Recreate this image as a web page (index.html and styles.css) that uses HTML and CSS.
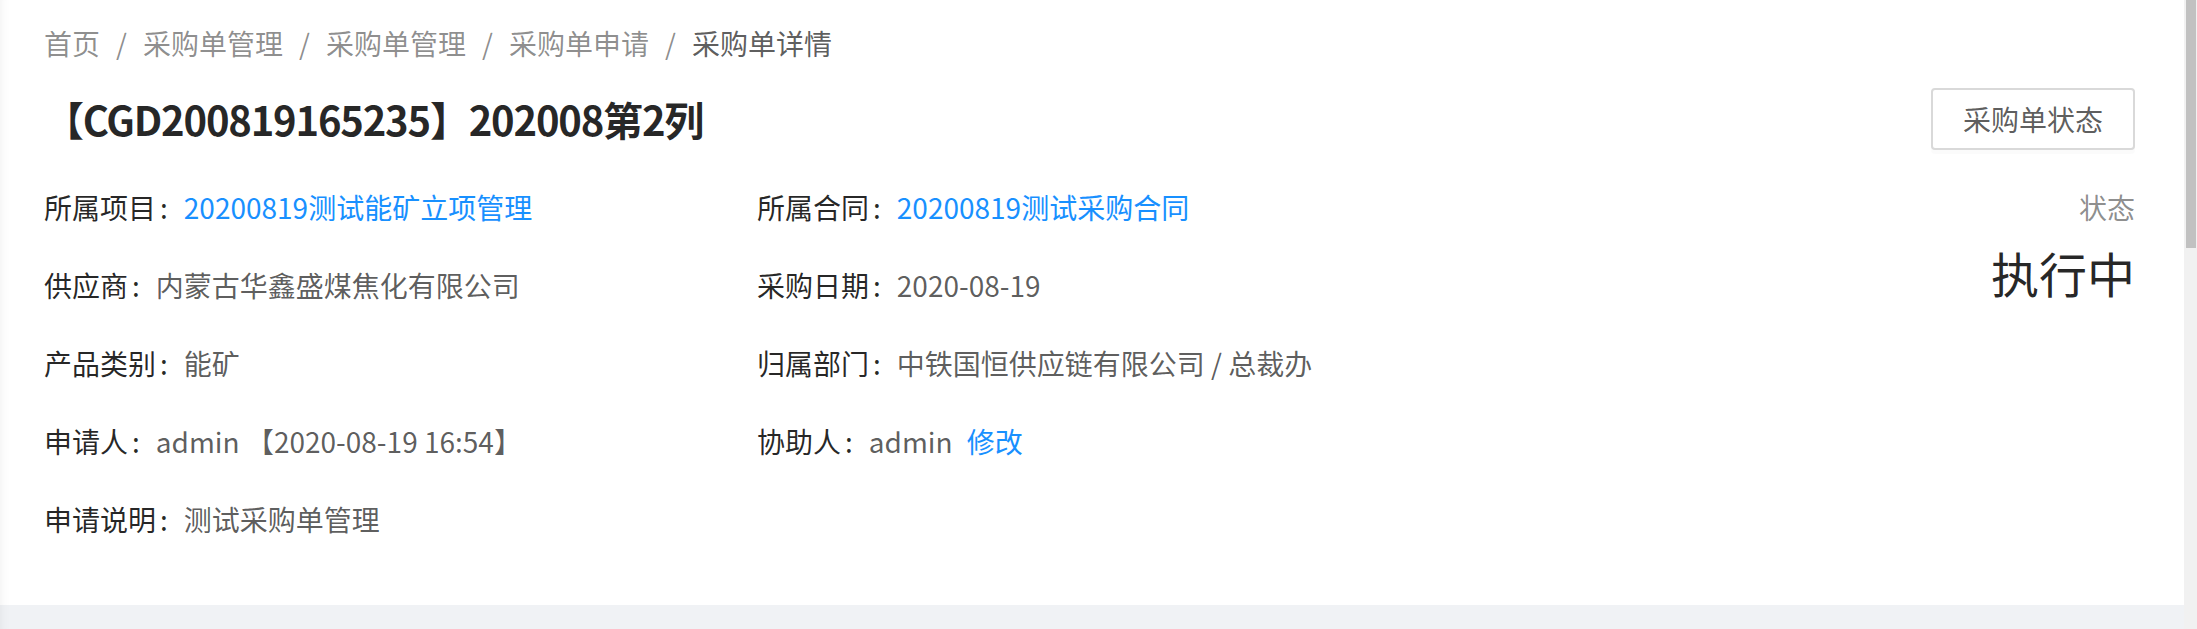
FILE: index.html
```html
<!DOCTYPE html>
<html lang="zh-CN">
<head>
  <meta charset="UTF-8" />
  <title>采购单详情</title>
  <link rel="stylesheet" href="styles.css">
</head>
<body>
  <div class="main">
    <div class="page-header">
      <div class="breadcrumb">
        <span class="crumb">首页</span><span class="sep">/</span><span class="crumb">采购单管理</span><span class="sep">/</span><span class="crumb">采购单管理</span><span class="sep">/</span><span class="crumb">采购单申请</span><span class="sep">/</span><span class="crumb current">采购单详情</span>
      </div>

      <div class="heading">
        <h1 class="title">【CGD200819165235】202008第2列</h1>
        <button class="btn" type="button">采购单状态</button>
      </div>

      <div class="content">
        <div class="desc">
          <div class="item"><span class="label">所属项目</span><a class="link">20200819测试能矿立项管理</a></div>
          <div class="item"><span class="label">所属合同</span><a class="link">20200819测试采购合同</a></div>
          <div class="item"><span class="label">供应商</span><span class="value">内蒙古华鑫盛煤焦化有限公司</span></div>
          <div class="item"><span class="label">采购日期</span><span class="value">2020-08-19</span></div>
          <div class="item"><span class="label">产品类别</span><span class="value">能矿</span></div>
          <div class="item"><span class="label">归属部门</span><span class="value">中铁国恒供应链有限公司 / 总裁办</span></div>
          <div class="item"><span class="label">申请人</span><span class="value">admin 【2020-08-19 16:54】</span></div>
          <div class="item"><span class="label">协助人</span><span class="value">admin</span><a class="link edit">修改</a></div>
          <div class="item"><span class="label">申请说明</span><span class="value">测试采购单管理</span></div>
        </div>

        <div class="extra">
          <div class="stat-title">状态</div>
          <div class="stat-value">执行中</div>
        </div>
      </div>
    </div>
  </div>

  <div class="scrollbar">
    <div class="thumb"></div>
  </div>
</body>
</html>
```

FILE: styles.css
```css
/* Base */
* {
  box-sizing: border-box;
}

body {
  margin: 0;
  height: 629px;
  overflow: hidden;
  display: flex;
  background: #f0f2f5;
  font-family: "Noto Sans CJK SC", "Microsoft YaHei", sans-serif;
  font-size: 28px;
  color: rgba(0, 0, 0, 0.65);
}

.main {
  flex: 1;
  box-shadow: inset 12px 0 10px -10px rgba(0, 0, 0, 0.05);
}

.page-header {
  background: #fff;
  height: 605px;
  padding: 21px 49px 0 44px;
  box-shadow: inset 12px 0 10px -10px rgba(0, 0, 0, 0.05);
}

/* Breadcrumb */
.breadcrumb {
  line-height: 44px;
  color: rgba(0, 0, 0, 0.45);
  white-space: nowrap;
}

.sep {
  margin: 0 16px;
}

.crumb.current {
  color: rgba(0, 0, 0, 0.65);
}

/* Title row */
.heading {
  display: flex;
  align-items: center;
  justify-content: space-between;
  margin-top: 23px;
  height: 62px;
}

.title {
  margin: 0;
  font-size: 40px;
  font-weight: 700;
  letter-spacing: -1.2px;
  line-height: 62px;
  color: rgba(0, 0, 0, 0.85);
}

.btn {
  height: 62px;
  padding: 0 30px;
  white-space: nowrap;
  font-family: inherit;
  font-size: 28px;
  line-height: 1;
  color: rgba(0, 0, 0, 0.65);
  background: #fff;
  border: 2px solid #d9d9d9;
  border-radius: 4px;
  box-shadow: 0 4px 0 rgba(0, 0, 0, 0.015);
}

/* Descriptions */
.content {
  display: flex;
  margin-top: 35px;
}

.desc {
  display: grid;
  grid-template-columns: 713px 713px;
  row-gap: 34px;
  line-height: 44px;
}

.item {
  white-space: nowrap;
}

.label {
  color: rgba(0, 0, 0, 0.85);
}

.label::after {
  content: ":";
  margin: 0 16px 0 4px;
}

.link {
  color: #1890ff;
  cursor: pointer;
}

.edit {
  margin-left: 14px;
}

/* Status */
.extra {
  margin-left: auto;
  text-align: right;
}

.stat-title {
  line-height: 44px;
  color: rgba(0, 0, 0, 0.45);
}

.stat-value {
  margin-top: 14px;
  font-size: 48px;
  line-height: 58px;
  color: rgba(0, 0, 0, 0.85);
}

/* Scrollbar */
.scrollbar {
  width: 13px;
  background: #f1f1f1;
}

.thumb {
  width: 10px;
  height: 248px;
  margin-left: 2px;
  background: #c1c1c1;
}
```
